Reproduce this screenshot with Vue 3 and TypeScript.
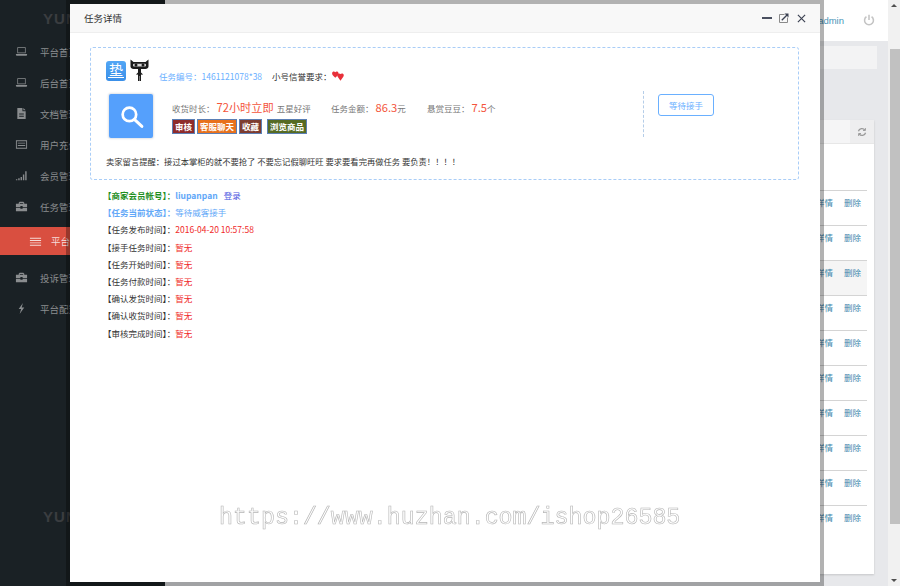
<script setup lang="ts">
interface NavItem { label: string; icon: string; active?: boolean }
const nav: NavItem[] = [
  { label: '平台首页', icon: 'laptop' },
  { label: '后台首页', icon: 'laptop' },
  { label: '文档管理', icon: 'file' },
  { label: '用户充值', icon: 'card' },
  { label: '会员管理', icon: 'signal' },
  { label: '任务管理', icon: 'case' },
  { label: '平台任务', icon: 'list', active: true },
  { label: '投诉管理', icon: 'case' },
  { label: '平台配置', icon: 'bolt' },
]
const rows = Array.from({ length: 10 }, (_, i) => i)
const tags = [
  { text: '审核', cls: 'tag-red' },
  { text: '客服聊天', cls: 'tag-orange' },
  { text: '收藏', cls: 'tag-brown' },
  { text: '浏览商品', cls: 'tag-olive' },
]
const times = ['接手任务时间', '任务开始时间', '任务付款时间', '确认发货时间', '确认收货时间', '审核完成时间']
</script>

<template>
  <div class="page">
    <aside class="sidebar">
      <div class="logo">YUN</div>
      <nav class="nav">
        <div v-for="item in nav" :key="item.label" class="nav-item" :class="{ active: item.active }">
          <svg class="nav-icon" viewBox="0 0 14 14" width="14" height="14" fill="currentColor">
            <template v-if="item.icon === 'laptop'">
              <path d="M2.5 2.5h9v6.5h-9zM3.3 3.3v4.9h7.4V3.3z" fill-rule="evenodd" />
              <path d="M1 9.8h12v1.1l-.6.6H1.6L1 10.9z" />
            </template>
            <path v-else-if="item.icon === 'file'" fill-rule="evenodd" d="M2.5 1h5.5v3.5h3.5V13h-9zM9 1l2.5 2.5H9zM4.5 7v1h5V7zM4.5 9.5v1h5v-1z" />
            <path v-else-if="item.icon === 'card'" fill-rule="evenodd" d="M1 2.5h12v9H1zM2 3.500v7h10v-7zM3 5h8v1H3zM3 7.500h8v1H3z" />
            <path v-else-if="item.icon === 'signal'" d="M1 11h1.5v1H1zM3.5 10H5v2H3.5zM6 8.500h1.500V12H6zM8.500 6H10v6H8.500zM11 2.500h1.500V12H11z" />
            <path v-else-if="item.icon === 'case'" fill-rule="evenodd" d="M5 2h4l1 1v1h3v3.500H8.200v-1H5.800v1H1V4h3V3zM5.200 3.200V4h3.600v-.8zM1 8.300h4.800v1h2.400v-1H13V12H1z" />
            <path v-else-if="item.icon === 'list'" d="M1 3h12v1H1zM1 5.500h12v1H1zM1 8h12v1H1zM1 10.500h12v1H1z" />
            <path v-else d="M8.500 1 4 7.500h2.600L5 13l5-7H7.200z" />
          </svg>
          <span>{{ item.label }}</span>
        </div>
      </nav>
      <div class="logo logo-bottom">YUN</div>
    </aside>

    <main class="main">
      <header class="topbar">
        <span class="admin">admin</span>
        <svg class="power" viewBox="0 0 14 14" width="12" height="12" fill="none" stroke="#c4c4c4" stroke-width="1.800">
          <path d="M4 3.200a5.200 5.200 0 1 0 6 0" />
          <path d="M7 1v6" />
        </svg>
      </header>
      <div class="crumb"></div>
      <section class="panel">
        <div class="panel-head">
          <div class="refresh">
            <svg viewBox="0 0 14 14" width="10" height="10" fill="none" stroke="#999" stroke-width="1.800">
              <path d="M2 6a5 5 0 0 1 9-1.500M12 8a5 5 0 0 1-9 1.500" />
              <path d="M11.800 1.500v3.400H8.400M2.200 12.500V9.100h3.400" stroke-width="1.300" />
            </svg>
          </div>
        </div>
        <div class="table">
          <div v-for="r in rows" :key="r" class="row" :class="{ hover: r === 2 }">
            <span class="link">详情</span>
            <span class="link">删除</span>
          </div>
        </div>
      </section>
    </main>

    <div class="scrollbar">
      <span class="arrow up"></span>
      <div class="track"><div class="thumb"></div></div>
      <span class="arrow down"></span>
    </div>

    <div class="modal">
      <div class="modal-title">
        <span>任务详情</span>
        <div class="controls">
          <span class="min"></span>
          <svg viewBox="0 0 10 10" width="10" height="10" fill="none">
            <path d="M.5 1.500h5M.5 1.500v8h8v-5" stroke="#8a8a8a" />
            <path d="M2.800 7.200 8 2" stroke="#3c4252" stroke-width="1.300" />
            <path d="M5.500.5h4v4z" fill="#3c4252" />
          </svg>
          <svg viewBox="0 0 10 10" width="9" height="9" fill="none" stroke="#3c4252" stroke-width="1.300">
            <path d="M1 1l8 8M9 1l-8 8" />
          </svg>
        </div>
      </div>
      <div class="modal-body">
        <div class="card">
          <div class="card-top">
            <span class="dian"><span class="dian-char">垫</span></span>
            <svg class="tmall" viewBox="0 0 19 22" width="19" height="22" fill="#1c1c1c">
              <path d="M.5 .5 3.500 3h12l3-2.500V7.500c0 1.500-1.500 2.500-3 2.500h-12C2 10 .5 9 .5 7.500z" />
              <rect x="3" y="4.800" width="13" height="2.600" rx="1" fill="#d8d8d8" />
              <circle cx="6" cy="6.100" r="1.500" fill="#1c1c1c" />
              <circle cx="13" cy="6.100" r="1.500" fill="#1c1c1c" />
              <path d="M8 10h3v3.500l1.800 1.800-.8.700-1-.8V22H9.700v-5h-.4v5H8v-6.800l-1 .8-.8-.7L8 13.500z" />
            </svg>
            <span class="task-no">任务编号：1461121078*38</span>
            <span class="credit">小号信誉要求：</span>
            <svg class="hearts" viewBox="0 0 12 10" width="12" height="10" fill="#e8303a">
              <path d="M3.300 1.200C4.400 0 6.500.6 6.500 2.400c0 1.700-1.900 3-3.200 4.400C2 5.400.1 4.100.1 2.400.1.600 2.200 0 3.300 1.200z" />
              <path d="M8.500 3C9.600 1.800 11.800 2.400 11.800 4.200c0 1.800-2 3.300-3.300 5.600C7.200 7.500 5.200 6 5.200 4.200 5.200 2.400 7.400 1.800 8.500 3z" />
            </svg>
          </div>
          <div class="card-mid">
            <div class="tile">
              <svg viewBox="0 0 24 24" width="25" height="25" fill="none" stroke="#fff">
                <circle cx="10" cy="10" r="6.500" stroke-width="2.600" />
                <path d="M15 15l7 6.500" stroke-width="2.800" stroke-linecap="round" />
              </svg>
            </div>
            <div class="info">
              <div class="stats">
                <div class="stat stat-a"><span>收货时长：</span><b>72小时立即</b><span class="after">五星好评</span></div>
                <div class="stat stat-b"><span>任务金额：</span><b>86.3</b><span>元</span></div>
                <div class="stat"><span>悬赏豆豆：</span><b>7.5</b><span>个</span></div>
              </div>
              <div class="tags">
                <span v-for="t in tags" :key="t.text" class="tag" :class="t.cls">{{ t.text }}</span>
              </div>
            </div>
            <div class="action">
              <button class="wait" type="button">等待接手</button>
            </div>
          </div>
          <p class="note">卖家留言提醒：接过本掌柜的就不要抢了 不要忘记假聊旺旺 要求要看完再做任务 要负责！！！！</p>
        </div>

        <ul class="lines">
          <li class="green"><b>【商家会员帐号】</b><b class="sep">：</b><b class="blue">liupanpan</b><span class="login">登录</span></li>
          <li class="blue"><b>【任务当前状态】</b><b class="sep">：</b><span>等待威客接手</span></li>
          <li><span>【任务发布时间】</span><span class="sep">：</span><span class="red">2016-04-20 10:57:58</span></li>
          <li v-for="t in times" :key="t"><span>【{{ t }}】</span><span class="sep">：</span><span class="red">暂无</span></li>
        </ul>
      </div>
    </div>

    <div class="watermark">https://www.huzhan.com/ishop26585</div>
  </div>
</template>

<style>
html, body { margin: 0; padding: 0; overflow: hidden; }
</style>

<style scoped>
.page {
  position: relative;
  display: flex;
  width: 900px;
  height: 586px;
  overflow: hidden;
  background: #e7e8eb;
  font-family: "Noto Sans CJK SC", "Liberation Sans", sans-serif;
  font-size: 8.500px;
  color: #333;
}
.sidebar {
  width: 165px;
  flex: none;
  background: #1a2125;
  display: flex;
  flex-direction: column;
  color: #8a8d8f;
}
.logo {
  height: 36px;
  padding: 2px 0 0 43px;
  font: bold 15px/34px "Liberation Sans", sans-serif;
  letter-spacing: 1px;
  color: #3a3d40;
  box-sizing: border-box;
}
.logo-bottom { margin-top: auto; margin-bottom: 52px; }
.nav { display: flex; flex-direction: column; }
.nav-item {
  height: 31px;
  display: flex;
  align-items: center;
  gap: 12px;
  padding-left: 15px;
  font-size: 9.500px;
}
.nav-item.active {
  height: 28px;
  margin: 5px 0 7px;
  padding-left: 29px;
  gap: 9px;
  background: #d94f40;
  color: #f6dcd8;
}
.nav-icon { flex: none; width: 13px; height: 13px; }
.main { flex: 1; min-width: 0; display: flex; flex-direction: column; }
.topbar {
  height: 41px;
  flex: none;
  background: #fff;
  display: flex;
  justify-content: flex-end;
  align-items: center;
  gap: 19px;
  padding-right: 13px;
  padding-bottom: 1px;
  box-sizing: border-box;
}
.admin { font: 9.500px "Liberation Sans", sans-serif; color: #4a94b8; }
.crumb { height: 23px; margin: 5px 11px 0 0; background: #f3f3f4; flex: none; }
.panel {
  margin: 51px 14px 0 0;
  height: 454px;
  background: #fff;
  box-shadow: 0 1px 2px rgba(0, 0, 0, .15);
  flex: none;
}
.panel-head {
  height: 24px;
  background: #f5f5f6;
  border-bottom: 1px solid #e7e7e7;
  display: flex;
  justify-content: flex-end;
  box-sizing: border-box;
}
.refresh {
  width: 24px;
  background: #eeeeef;
  display: flex;
  align-items: center;
  justify-content: center;
}
.table { padding: 46px 7px 0 0; }
.row {
  height: 35px;
  box-sizing: border-box;
  border-top: 1px solid #d4d4d4;
  display: flex;
  justify-content: flex-end;
  align-items: flex-start;
  gap: 11px;
  padding: 5px 6px 0 0;
  font-size: 8.500px;
  line-height: 12px;
}
.row.hover { background: #f5f5f5; }
.link { color: #3f88ad; }
.scrollbar {
  width: 12px;
  flex: none;
  background: #f1f1f1;
  display: flex;
  flex-direction: column;
  align-items: flex-end;
}
.track { flex: 1; width: 10px; padding-top: 38px; box-sizing: border-box; }
.thumb { height: 475px; background: #c1c1c1; }
.arrow { width: 0; height: 0; margin: 4px 0; align-self: center; border-left: 3px solid transparent; border-right: 3px solid transparent; }
.arrow.up { border-bottom: 3px solid #505050; }
.arrow.down { border-top: 3px solid #505050; }

.modal {
  position: absolute;
  left: 66px;
  top: 0;
  width: 758px;
  height: 586px;
  box-sizing: border-box;
  border: 4px solid rgba(0, 0, 0, .3);
  background: #fff;
  background-clip: padding-box;
  display: flex;
  flex-direction: column;
}
.modal-title {
  height: 29px;
  flex: none;
  box-sizing: border-box;
  background: #f8f8f8;
  border-bottom: 1px solid #eee;
  display: flex;
  align-items: center;
  justify-content: space-between;
  padding: 0 14px;
  font-size: 9.500px;
  color: #333;
}
.controls { display: flex; align-items: center; gap: 8px; }
.min { width: 10px; height: 2px; margin-right: -1px; background: #4a5060; }
.modal-body { padding: 14px 21px 0 20px; flex: 1; }
.card {
  height: 133px;
  box-sizing: border-box;
  border: 1px dashed #a9cdf7;
  border-radius: 3px;
  padding: 10px 15px 0;
}
.card-top { display: flex; align-items: flex-end; height: 23px; }
.dian {
  width: 20px;
  height: 20px;
  border-radius: 3px;
  background: linear-gradient(#52a6f5, #3a8fe8);
  flex: none;
  display: flex;
  justify-content: center;
  align-items: flex-start;
}
.dian-char {
  color: #fff;
  font-size: 14px;
  line-height: 16px;
  width: 16px;
  text-align: center;
  border-bottom: 1px solid #fff;
}
.tmall { margin-left: 4px; flex: none; }
.task-no { margin-left: 10px; margin-bottom: -1px; color: #6ab0ff; line-height: 12px; white-space: nowrap; }
.credit { margin-left: 10px; margin-bottom: -1px; line-height: 12px; white-space: nowrap; }
.hearts { margin-bottom: 0; }
.card-mid { display: flex; margin-top: 13px; height: 46px; padding-left: 3px; }
.tile {
  width: 44px;
  height: 44px;
  background: #55a0fc;
  box-shadow: 0 0 2px 1px #dfe3e8;
  border-radius: 2px;
  display: flex;
  align-items: center;
  justify-content: center;
  flex: none;
}
.info { margin-left: 19px; width: 471px; flex: none; }
.stats {
  display: flex;
  align-items: baseline;
  height: 24px;
  padding-top: 5px;
  box-sizing: border-box;
  color: #777;
  white-space: nowrap;
}
.stat { display: flex; align-items: baseline; }
.stat b { font-weight: 400; font-size: 11.200px; color: #f4553c; margin-left: 2px; }
.stat-a { width: 159px; }
.stat-b { width: 96px; }
.after { margin-left: 3px; }
.tags { display: flex; gap: 2px; margin-top: 1px; }
.tag {
  height: 15px;
  box-sizing: border-box;
  padding: 0 2px;
  border: 1px solid #5b7fb5;
  color: #fff;
  font-weight: 700;
  line-height: 13px;
}
.tag-red { background: #8e2b2b; }
.tag-orange { background: #e8711c; }
.tag-brown { background: #7d3c30; }
.tag-olive { background: #566b23; margin-left: 3px; }
.action {
  border-left: 1px dashed #b5cde8;
  height: 46px;
  margin-top: -3px;
  padding: 3px 0 0 14px;
  box-sizing: border-box;
}
.wait {
  width: 56px;
  height: 22px;
  padding: 0;
  font: inherit;
  font-size: 8.500px;
  color: #6ab0ff;
  background: #fff;
  border: 1px solid #6ab0ff;
  border-radius: 3px;
}
.note { margin: 15px 0 0; font-size: 8.300px; line-height: 12px; color: #333; white-space: nowrap; }
.lines { list-style: none; margin: 7px 0 0 13px; padding: 0; }
.lines li { height: 17.200px; line-height: 17.200px; white-space: nowrap; }
.sep { margin-left: 0; }
.green { color: #1f8f1f; }
.blue { color: #62a8f8; }
.red { color: #f02a2a; }
.login { margin-left: 6px; color: #4a55e0; }
.watermark {
  position: absolute;
  left: 219px;
  top: 503px;
  font: 23.300px/30px "Liberation Mono", monospace;
  color: #fff;
  -webkit-text-stroke: .6px #b5b5b5;
  white-space: nowrap;
  pointer-events: none;
  will-change: transform;
}
</style>
